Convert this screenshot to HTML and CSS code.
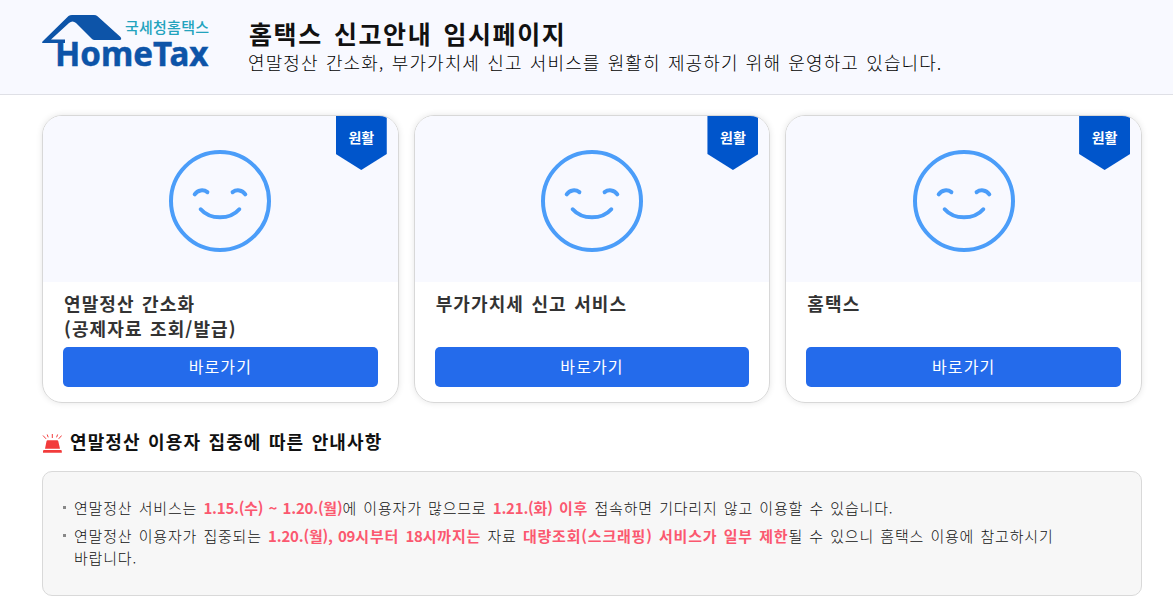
FILE: index.html
```html
<!DOCTYPE html>
<html lang="ko">

<head>
    <meta charset="UTF-8">
    <meta name="viewport" content="width=device-width, initial-scale=1.0">
    <title>홈택스 신고안내 임시페이지</title>
    <link rel="stylesheet" href="styles.css">
</head>

<body>
    <!-- icons used more than once -->
    <svg width="0" height="0" class="symbols">
        <symbol id="smile" viewBox="0 0 102 102">
            <circle cx="51" cy="51" r="49" />
            <path d="M25.7 44.3C28.7 39.8 34.5 39.2 38.4 42.2M63.6 42.2C67.5 39.2 73.3 39.8 76.3 44.3M31.7 59.3C41 70 61 70 70.3 59.3" />
        </symbol>
    </svg>

    <header class="header">
        <svg class="logo" width="170" height="56" viewBox="0 0 170 56">
            <path class="roof" d="M.5 26.5L26.5 1Q28 0 30 0H52Q54 0 55.5 1.2L78.5 22Q80.3 24.8 77.5 25H52.5Q51 25 50 24L34 8Q30.5 5 27 8L9 24.5H23V28H1.5Q-.7 28 .5 26.5Z" />
            <text class="logo-ko" x="83" y="18" textLength="84">국세청홈택스</text>
            <text class="logo-en" x="13" y="51" textLength="153.5" lengthAdjust="spacingAndGlyphs">HomeTax</text>
        </svg>
        <div class="header-text">
            <h1>홈택스 신고안내 임시페이지</h1>
            <p>연말정산 간소화, 부가가치세 신고 서비스를 원활히 제공하기 위해 운영하고 있습니다.</p>
        </div>
    </header>

    <main class="container">
        <div class="cards">
            <div class="card">
                <div class="card-top">
                    <svg class="face" width="102" height="102"><use href="#smile" /></svg>
                    <span class="badge">원활</span>
                </div>
                <div class="card-body">
                    <h2>연말정산 간소화<br>(공제자료 조회/발급)</h2>
                    <a href="#" class="btn">바로가기</a>
                </div>
            </div>
            <div class="card">
                <div class="card-top">
                    <svg class="face" width="102" height="102"><use href="#smile" /></svg>
                    <span class="badge">원활</span>
                </div>
                <div class="card-body">
                    <h2>부가가치세 신고 서비스</h2>
                    <a href="#" class="btn">바로가기</a>
                </div>
            </div>
            <div class="card">
                <div class="card-top">
                    <svg class="face" width="102" height="102"><use href="#smile" /></svg>
                    <span class="badge">원활</span>
                </div>
                <div class="card-body">
                    <h2>홈택스</h2>
                    <a href="#" class="btn">바로가기</a>
                </div>
            </div>
        </div>

        <h3 class="notice-title">
            <svg class="siren" width="20" height="20" viewBox="0 0 20 20">
                <path class="ray" d="M1 1.5L4 4.8M5.2 .5L6.2 3.3M10.3 0V4M15.6 .5L14.6 3.3M19.7 1.5L16.7 4.8" />
                <path class="lamp" d="M5.5 6.3H15.2Q16 6.3 16.3 7.2L18 14.8H3L4.5 7.2Q4.7 6.3 5.5 6.3ZM2.2 16H18.8Q19.8 16 19.8 17V18.8H1V17Q1 16 2.2 16Z" />
            </svg>
            연말정산 이용자 집중에 따른 안내사항
        </h3>

        <ul class="notice">
            <li>연말정산 서비스는 <b class="date">1.15.(수) ~ 1.20.(월)</b>에 이용자가 많으므로 <b><span class="date">1.21.(화)</span> 이후</b> 접속하면 기다리지 않고 이용할 수 있습니다.</li>
            <li>연말정산 이용자가 집중되는 <b><span class="date">1.20.(월), 09</span>시부터 <span class="date">18</span>시까지는</b> 자료 <b>대량조회(스크래핑) 서비스가 일부 제한</b>될 수 있으니 홈택스 이용에 참고하시기<br>바랍니다.</li>
        </ul>
    </main>
</body>

</html>
```
FILE: styles.css
```css
* {
    margin: 0;
    padding: 0;
    box-sizing: border-box;
}

body {
    font-family: "Noto Sans CJK KR", sans-serif;
    background-color: #fff;
    color: #111;
    overflow: hidden;
}

.symbols {
    display: block;
}

/* Header */
.header {
    display: flex;
    align-items: flex-start;
    height: 95px;
    padding: 15px 31px 0 42px;
    background-color: #f8f9ff;
    border-bottom: 1px solid #dfe0e6;
}

.logo {
    margin-right: 36px;
    overflow: visible;
}

.roof {
    fill: #0d54a8;
}

.logo-ko {
    font-size: 15px;
    font-weight: 500;
    fill: #23a3bd;
}

.logo-en {
    font-family: "Noto Sans", sans-serif;
    font-size: 34.5px;
    font-weight: 700;
    fill: #0d54a8;
    stroke: #0d54a8;
    stroke-width: 0.5;
}

.header-text {
    white-space: nowrap;
}

.header h1 {
    padding-left: 1px;
    font-size: 25px;
    font-weight: 700;
    line-height: 36px;
    letter-spacing: 1.6px;
    word-spacing: 2.5px;
}

.header p {
    margin-top: -1px;
    color: #000;
    font-size: 18px;
    font-weight: 300;
    line-height: 24px;
    letter-spacing: 1.1px;
    word-spacing: 1.1px;
}

.container {
    padding: 20px 31px 0 42px;
}

/* Service cards */
.cards {
    display: grid;
    grid-template-columns: repeat(3, 1fr);
    gap: 15px;
}

.card {
    height: 288px;
    border: 1px solid #d8d8d8;
    border-radius: 20px;
    box-shadow: 0 0 6px rgba(0, 0, 0, 0.1);
    overflow: hidden;
}

.card-top {
    position: relative;
    display: flex;
    justify-content: center;
    height: 166px;
    padding-top: 34px;
    background-color: #f8f9ff;
}

.face {
    fill: none;
    stroke: #4b9df9;
    stroke-width: 4;
    stroke-linecap: round;
}

.badge {
    position: absolute;
    top: 0;
    right: 10.9px;
    width: 51px;
    height: 54px;
    background-color: #0055cb;
    clip-path: polygon(0 0, 100% 0, 100% 38px, 50% 100%, 0 38px);
    color: #fff;
    font-size: 14px;
    font-weight: 700;
    line-height: 42px;
    text-align: center;
}

.card-body {
    padding: 9px 20px 0;
}

.card-body h2 {
    height: 56px;
    padding-left: 1px;
    color: #333;
    font-size: 18px;
    font-weight: 700;
    line-height: 25px;
    letter-spacing: 1.1px;
    word-spacing: 1.3px;
}

.btn {
    display: block;
    height: 40px;
    border-radius: 5px;
    background-color: #246beb;
    color: #fff;
    font-size: 16px;
    font-weight: 400;
    line-height: 38px;
    letter-spacing: 1.1px;
    text-align: center;
    text-decoration: none;
}

/* Notice */
.notice-title {
    display: flex;
    align-items: center;
    gap: 8px;
    height: 28px;
    margin: 24px 0 16px;
    font-size: 18px;
    font-weight: 700;
    letter-spacing: 1.1px;
    word-spacing: 1.3px;
}

.siren {
    margin-top: 5px;
}

.lamp {
    fill: #f23b3b;
}

.ray {
    fill: none;
    stroke: #f23b3b;
}

.notice {
    height: 125px;
    padding: 25px 20px 0;
    border: 1px solid #d9d9d9;
    border-radius: 10px;
    background-color: #f7f7f7;
    color: #111;
    list-style: none;
    white-space: nowrap;
}

.notice li {
    position: relative;
    margin-bottom: 6px;
    padding-left: 11px;
    font-size: 15px;
    font-weight: 300;
    line-height: 22px;
    letter-spacing: 0.8px;
    word-spacing: 1.3px;
}

.notice li::before {
    content: "";
    position: absolute;
    top: 9px;
    left: 0;
    width: 3px;
    height: 3px;
    background-color: #888;
}

.notice b {
    color: #fb586f;
    font-weight: 700;
}

.notice .date {
    letter-spacing: -0.2px;
}
```
